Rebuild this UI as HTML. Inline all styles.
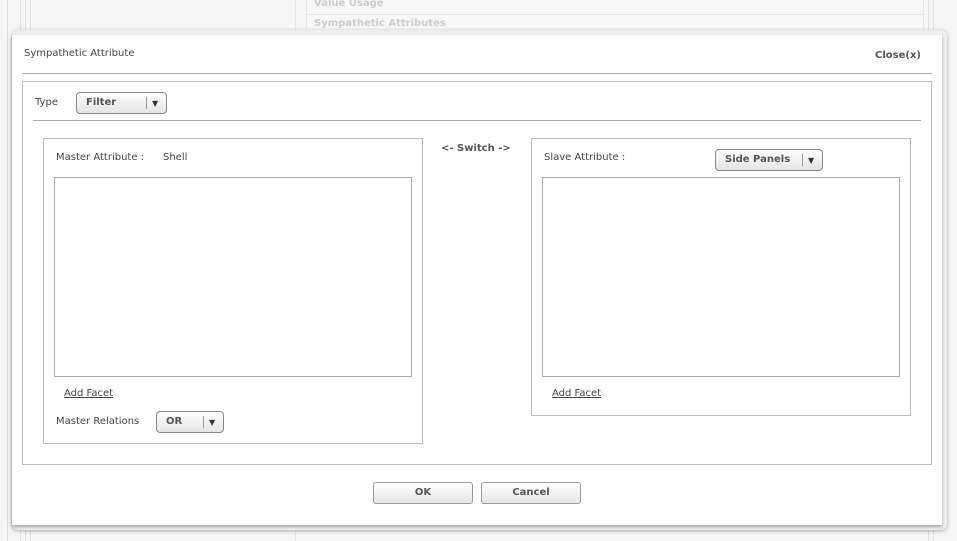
<!DOCTYPE html>
<html><head><meta charset="utf-8"><style>
*{box-sizing:border-box;margin:0;padding:0}
body{width:957px;height:541px;overflow:hidden;background:#f4f4f4;font-family:"DejaVu Sans","Liberation Sans",sans-serif;font-size:10px;color:#444;position:relative}
.a{position:absolute}
.dlg{left:12px;top:35px;width:930px;height:490px;background:#fff;box-shadow:0 2px 3px rgba(0,0,0,.3)}
.box{border:1px solid #bbb;background:#fff}
.sel{border:1px solid #888;border-radius:4px;background:linear-gradient(#fff,#e4e4e4);font-weight:bold;color:#555;font-size:10px;line-height:20px;padding-left:9px}
.sel .sep{position:absolute;top:4px;bottom:4px;width:1px;background:#999}
.sel .ar{position:absolute;top:1px;font-size:8px;color:#333}
.btn{border:1px solid #999;border-radius:3px;background:linear-gradient(#fff,#e6e6e6);font-weight:bold;color:#555;text-align:center;line-height:20px;font-size:10px}
u{color:#444}
</style></head><body>
<div class="a" style="left:0;top:0;width:957px;height:541px;background:#f6f6f6"></div>
<div class="a" style="left:7px;top:0;width:1px;height:541px;background:#ddd"></div>
<div class="a" style="left:20px;top:0;width:1px;height:541px;background:#e0e0e0"></div>
<div class="a" style="left:25px;top:0;width:1px;height:541px;background:#e0e0e0"></div>
<div class="a" style="left:30px;top:0;width:1px;height:541px;background:#e0e0e0"></div>
<div class="a" style="left:295px;top:0;width:1px;height:541px;background:#e6e6e6"></div>
<div class="a" style="left:306px;top:0;width:618px;height:35px;background:#f8f8f8;border-left:1px solid #e6e6e6;border-right:1px solid #e6e6e6"></div>
<div class="a" style="left:306px;top:14px;width:618px;height:1px;background:#e6e6e6"></div>
<div class="a" style="left:314px;top:-2px;color:#ccc;font-weight:bold;font-size:10px">Value Usage</div>
<div class="a" style="left:314px;top:18px;color:#ccc;font-weight:bold;font-size:10px">Sympathetic Attributes</div>
<div class="a" style="left:928px;top:0;width:1px;height:541px;background:#e0e0e0"></div>
<div class="a" style="left:933px;top:0;width:1px;height:541px;background:#e0e0e0"></div>
<div class="a" style="left:12px;top:30px;width:935px;height:500px;background:#eee;border-radius:6px;box-shadow:0 1px 4px rgba(0,0,0,.3)"></div>
<div class="a dlg"></div>
<div class="a" style="left:24px;top:48px;font-size:10px">Sympathetic Attribute</div>
<div class="a" style="left:875px;top:50px;font-weight:bold;color:#555">Close(x)</div>
<div class="a" style="left:22px;top:73px;width:910px;height:1px;background:#aaa"></div>
<div class="a box" style="left:22px;top:81px;width:910px;height:384px"></div>
<div class="a" style="left:35px;top:97px">Type</div>
<div class="a sel" style="left:76px;top:92px;width:91px;height:22px">Filter<span class="sep" style="left:69px"></span><span class="ar" style="left:75px">▼</span></div>
<div class="a" style="left:33px;top:120px;width:888px;height:1px;background:#aaa"></div>
<div class="a box" style="left:43px;top:138px;width:380px;height:306px"></div>
<div class="a" style="left:56px;top:152px">Master Attribute :</div>
<div class="a" style="left:163px;top:152px">Shell</div>
<div class="a box" style="left:54px;top:177px;width:358px;height:200px;border-color:#aaa"></div>
<div class="a" style="left:64px;top:388px"><u>Add Facet</u></div>
<div class="a" style="left:56px;top:416px">Master Relations</div>
<div class="a sel" style="left:156px;top:411px;width:68px;height:22px">OR<span class="sep" style="left:46px"></span><span class="ar" style="left:52px">▼</span></div>
<div class="a" style="left:441px;top:143px;font-weight:bold;color:#555">&lt;- Switch -&gt;</div>
<div class="a box" style="left:531px;top:138px;width:380px;height:278px"></div>
<div class="a" style="left:544px;top:152px">Slave Attribute :</div>
<div class="a sel" style="left:715px;top:149px;width:108px;height:22px">Side Panels<span class="sep" style="left:86px"></span><span class="ar" style="left:92px">▼</span></div>
<div class="a box" style="left:542px;top:177px;width:358px;height:200px;border-color:#aaa"></div>
<div class="a" style="left:552px;top:388px"><u>Add Facet</u></div>
<div class="a btn" style="left:373px;top:482px;width:100px;height:22px">OK</div>
<div class="a btn" style="left:481px;top:482px;width:100px;height:22px">Cancel</div>
</body></html>
